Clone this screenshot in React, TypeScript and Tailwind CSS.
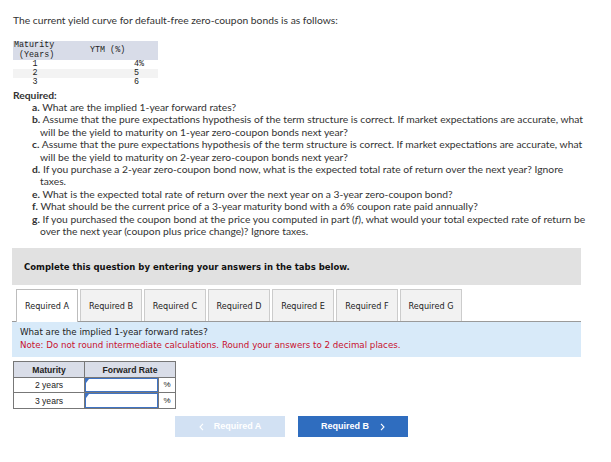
import React from "react";

const body = { fontFamily: "Lato, 'Liberation Sans', sans-serif" };
const verd = { fontFamily: "'DejaVu Sans', Verdana, sans-serif" };
const mono = { fontFamily: "'Liberation Mono', 'Courier New', monospace" };
const arial = { fontFamily: "'Liberation Sans', Arial, sans-serif" };

function Item({ l, children }: { l: string; children: React.ReactNode }) {
  return (
    <div className="pl-[24px] -indent-[8px] whitespace-nowrap">
      <b className="font-bold">{l}</b> {children}
    </div>
  );
}

function Chevron({ dir }: { dir: "l" | "r" }) {
  return (
    <svg width="5" height="8" viewBox="0 0 5 8" className="block">
      <path
        d={dir === "r" ? "M1 0.8 L4 4 L1 7.2" : "M4 0.8 L1 4 L4 7.2"}
        fill="none"
        stroke="white"
        strokeWidth="1.1"
      />
    </svg>
  );
}

export default function App() {
  const tabs = ["A", "B", "C", "D", "E", "F", "G"];
  const rows = [
    ["1", "4%"],
    ["2", "5\u00a0"],
    ["3", "6\u00a0"],
  ];
  return (
    <div className="w-[611px] h-[462px] bg-white overflow-hidden text-[#333]" style={body}>
      <div className="pt-[13px] pl-[13px] text-[10.3px] leading-[14px]">
        The current yield curve for default-free zero-coupon bonds is as follows:
      </div>

      <div className="mt-[14px] ml-[13px] w-[145px] text-[8.4px] text-[#222]" style={mono}>
        <div className="grid grid-cols-[44px_101px] bg-[#d8dce8] h-[19px] items-center leading-[9.5px]">
          <div className="pl-[1px]">
            Maturity
            <br />
            &nbsp;(Years)
          </div>
          <div className="pl-[33px]">YTM (%)</div>
        </div>
        <div className="grid grid-cols-[44px_101px] auto-rows-[9px] leading-[9px]">
          {rows.map((r, i) => (
            <React.Fragment key={i}>
              <div className={`text-center ${i === 1 ? "bg-[#f3f3f3]" : ""}`}>{r[0]}</div>
              <div className={`text-right pr-[14px] ${i === 1 ? "bg-[#f3f3f3]" : ""}`}>{r[1]}</div>
            </React.Fragment>
          ))}
        </div>
      </div>

      <div className="pl-[13px] mt-[2px] text-[10.3px] leading-[12px] font-bold">Required:</div>
      <div className="pl-[16px] text-[10.3px] leading-[12.4px]">
        <Item l="a.">What are the implied 1-year forward rates?</Item>
        <Item l="b.">
          Assume that the pure expectations hypothesis of the term structure is correct. If market expectations are accurate, what
          <br />
          will be the yield to maturity on 1-year zero-coupon bonds next year?
        </Item>
        <Item l="c.">
          Assume that the pure expectations hypothesis of the term structure is correct. If market expectations are accurate, what
          <br />
          will be the yield to maturity on 2-year zero-coupon bonds next year?
        </Item>
        <Item l="d.">
          If you purchase a 2-year zero-coupon bond now, what is the expected total rate of return over the next year? Ignore
          <br />
          taxes.
        </Item>
        <Item l="e.">What is the expected total rate of return over the next year on a 3-year zero-coupon bond?</Item>
        <Item l="f.">What should be the current price of a 3-year maturity bond with a 6% coupon rate paid annually?</Item>
        <Item l="g.">
          If you purchased the coupon bond at the price you computed in part (<i>f</i>), what would your total expected rate of return be
          <br />
          over the next year (coupon plus price change)? Ignore taxes.
        </Item>
      </div>

      <div
        className="mt-[11px] ml-[12px] w-[569px] h-[37px] bg-[#e1e1e1] flex items-center pl-[12px] text-[8.5px] font-bold text-[#111]"
        style={verd}
      >
        Complete this question by entering your answers in the tabs below.
      </div>

      <div className="ml-[12px] w-[569px] mt-[4px]" style={verd}>
        <div className="flex gap-[2px] pl-[4px] border-b border-[#9a9a9a] h-[33px]">
          {tabs.map((t, i) => (
            <div
              key={t}
              className={`w-[62px] flex items-center justify-center text-[8.1px] text-[#222] border border-b-0 ${
                i === 0 ? "bg-white border-[#bdbdbd] h-[33px] relative z-10" : "bg-[#f2f2f2] border-[#cccccc] h-[32px]"
              }`}
            >
              Required {t}
            </div>
          ))}
        </div>
        <div className="bg-[#d8eaf9] h-[35px] pt-[4px] pl-[8px] text-[8.7px] leading-[13px]">
          <div className="text-[#222]">What are the implied 1-year forward rates?</div>
          <div className="text-[#c8102e]">
            Note: Do not round intermediate calculations. Round your answers to 2 decimal places.
          </div>
        </div>
      </div>

      <div className="mt-[4px] ml-[13px] w-[163px] border border-[#777] text-[8.6px] text-[#222]" style={arial}>
        <div className="flex h-[16px] bg-[#d9dde8] border-b border-[#777] font-bold">
          <div className="w-[71px] border-r border-[#777] flex items-center justify-center">Maturity</div>
          <div className="flex-1 flex items-center justify-center">Forward Rate</div>
        </div>
        {["2 years", "3 years"].map((y, i) => (
          <div key={y} className={`flex h-[15px] ${i === 0 ? "border-b border-[#777]" : ""}`}>
            <div className="w-[71px] border-r border-[#777] flex items-center justify-center">{y}</div>
            <div className="w-[73px] relative border-[1.5px] border-[#3f73c4] bg-white">
              <div className="absolute left-0 top-0 w-0 h-0 border-t-[4px] border-t-[#3f73c4] border-r-[3px] border-r-transparent" />
            </div>
            <div className="flex-1 flex items-center justify-center text-[8px] border-l border-[#777]">%</div>
          </div>
        ))}
      </div>

      <div className="mt-[7px] ml-[175px] flex gap-[13px]" style={arial}>
        <div className="w-[110px] h-[21px] bg-[#d2e1f3] text-white text-[9px] font-bold flex items-center justify-center">
          <span className="mr-[10px]">
            <Chevron dir="l" />
          </span>
          Required A
        </div>
        <div className="w-[110px] h-[21px] bg-[#2f6dbf] text-white text-[9px] font-bold flex items-center justify-center">
          Required B
          <span className="ml-[11px]">
            <Chevron dir="r" />
          </span>
        </div>
      </div>
    </div>
  );
}
